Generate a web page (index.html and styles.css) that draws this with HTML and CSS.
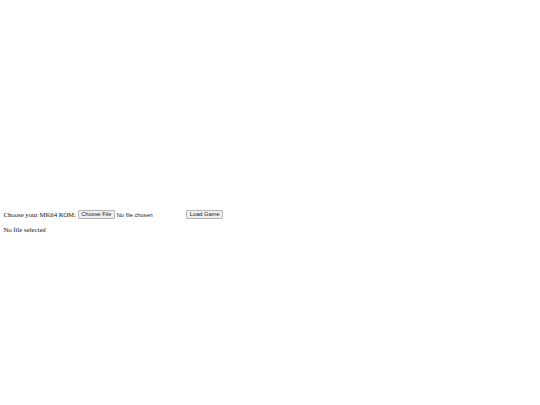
FILE: index.html
```html
<!DOCTYPE html>
<html>
<head>
<meta charset="utf-8">
<title>MK64</title>
<link rel="stylesheet" href="styles.css">
</head>
<body>
<div class="screen"><canvas class="game" width="640" height="480"></canvas></div>
<div class="controls">
<label class="rom-label" for="rom">Choose your MK64 ROM:</label>
<input class="rom-input" type="file" id="rom">
<button class="load-btn" type="button">Load Game</button>
</div>
<p class="status">No file selected</p>
</body>
</html>
```
FILE: styles.css
```css
body {
  margin: 3.4px;
  font-family: "Liberation Serif", "Times New Roman", serif;
  font-size: 6.75px;
  background: #fff;
  color: #111;
}
.screen {
  height: 206.5px;
}
.game {
  display: block;
  width: 270px;
  height: 202.5px;
}
.controls {
  display: flex;
  align-items: center;
  gap: 1.7px;
  height: 9px;
}
.rom-input,
.load-btn {
  font-family: "Liberation Sans", Arial, sans-serif;
  font-size: 5.7px;
  color: #222;
}
.rom-input {
  width: 107px;
}
.rom-input::file-selector-button {
  font-family: "Liberation Sans", Arial, sans-serif;
  font-size: 5.7px;
  color: #222;
  padding: 0.6px 2.5px;
  margin-right: 1.7px;
  border: 1px solid #b4b4b4;
  border-radius: 1px;
  background: #efefef;
}
.load-btn {
  padding: 0.6px 2.5px;
  border: 1px solid #b4b4b4;
  border-radius: 1px;
  background: #efefef;
}
.status {
  margin: 6.9px 0;
}
```
